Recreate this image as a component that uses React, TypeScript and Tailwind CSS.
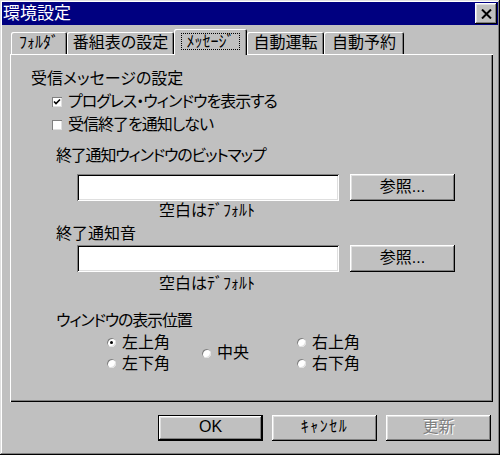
import React from 'react'

const raised =
  'shadow-[inset_-1px_-1px_#000,inset_1px_1px_#fff,inset_-2px_-2px_#808080,inset_2px_2px_#dfdfdf]'
const sunken =
  'shadow-[inset_1px_1px_#808080,inset_-1px_-1px_#fff,inset_2px_2px_#000,inset_-2px_-2px_#dfdfdf]'

function Tab({ label, width, active }: { label: string; width: string; active?: boolean }) {
  if (active) {
    return (
      <div
        className={`relative z-10 -mb-px flex h-[26px] ${width} items-center justify-center rounded-t-[2px] bg-[#c0c0c0] shadow-[inset_1px_1px_#fff,inset_-1px_0_#000,inset_-2px_0_#808080]`}
      >
        <span className="-mt-[2px] border border-dotted border-black px-[4px] leading-[15px]">
          {label}
        </span>
      </div>
    )
  }
  return (
    <div
      className={`flex h-[22px] ${width} items-center justify-center rounded-t-[2px] bg-[#c0c0c0] pb-[1px] shadow-[inset_1px_1px_#fff,inset_-1px_0_#000,inset_-2px_0_#808080]`}
    >
      <span className="leading-[18px]">{label}</span>
    </div>
  )
}

function Checkbox({ checked, label }: { checked?: boolean; label: string }) {
  return (
    <div className="flex h-[22px] items-center pb-[2px] pl-[42px]">
      <span className="flex h-[10px] w-[10px] items-center justify-center bg-white shadow-[inset_1px_1px_#808080,inset_-1px_-1px_#dfdfdf]">
        {checked && (
          <svg width="8" height="8" viewBox="0 0 8 8">
            <path d="M1 3.5 L3 5.5 L7 1.5" fill="none" stroke="#000" strokeWidth="1.6" />
          </svg>
        )}
      </span>
      <span className="ml-[6px] leading-[18px] tracking-[-1px]">{label}</span>
    </div>
  )
}

function Radio({ checked, label }: { checked?: boolean; label: string }) {
  return (
    <div className="flex items-center">
      <span className="flex h-[9px] w-[9px] items-center justify-center rounded-full bg-white shadow-[inset_1px_1px_#808080,inset_-1px_-1px_#dfdfdf]">
        {checked && <span className="h-[3px] w-[3px] rounded-full bg-black" />}
      </span>
      <span className="ml-[6px] leading-[18px]">{label}</span>
    </div>
  )
}

function Button({ children, primary, disabled }: { children: React.ReactNode; primary?: boolean; disabled?: boolean }) {
  return (
    <button
      className={`flex h-[26px] w-[105px] items-center justify-center bg-[#c0c0c0] pb-[2px] ${raised} ${
        primary ? 'border border-black' : ''
      } ${disabled ? 'text-[#808080] [text-shadow:1px_1px_#fff]' : 'text-black'}`}
    >
      <span className="leading-[18px]">{children}</span>
    </button>
  )
}

function FileRow() {
  return (
    <div className="ml-[67px] mt-[1px] flex h-[27px] items-stretch">
      <div className={`w-[262px] bg-white ${sunken}`} />
      <div className={`ml-[11px] flex w-[105px] items-center justify-center bg-[#c0c0c0] pb-[2px] ${raised}`}>
        <span className="leading-[18px]">参照...</span>
      </div>
    </div>
  )
}

export default function App() {
  return (
    <div className="flex h-[455px] w-[500px] flex-col bg-[#c0c0c0] p-[2px] font-['Liberation_Sans','Noto_Sans_CJK_JP',sans-serif] text-[16px] text-black [font-feature-settings:'palt'] shadow-[inset_-1px_-1px_#000,inset_1px_1px_#dfdfdf,inset_-2px_-2px_#808080,inset_2px_2px_#fff]">
      {/* title bar */}
      <div className="flex h-[23px] items-center justify-between bg-[#000080] pl-[1px]">
        <span className="text-[17px] leading-[20px] text-white">環境設定</span>
        <div className={`mr-[1px] flex h-[21px] w-[22px] items-center justify-center bg-[#c0c0c0] ${raised}`}>
          <svg width="11" height="10" viewBox="0 0 11 10">
            <path d="M1 0.5 L10 9.5 M10 0.5 L1 9.5" stroke="#000" strokeWidth="2" />
          </svg>
        </div>
      </div>

      {/* tabs */}
      <div className="ml-[9px] mt-[2px] flex h-[27px] items-end">
        <Tab label="ﾌｫﾙﾀﾞ" width="w-[56px]" />
        <Tab label="番組表の設定" width="w-[107px]" />
        <Tab label="ﾒｯｾｰｼﾞ" width="w-[73px]" active />
        <Tab label="自動運転" width="w-[77px]" />
        <Tab label="自動予約" width="w-[80px]" />
      </div>

      {/* panel */}
      <div className="ml-[8px] flex h-[348px] w-[483px] flex-col shadow-[inset_1px_1px_#fff,inset_-1px_-1px_#000,inset_-2px_-2px_#808080]">
        <div className="mt-[14px] flex h-[22px] items-center pb-[1px] pl-[21px]">
          <span className="leading-[18px]">受信メッセージの設定</span>
        </div>
        <div className="mt-[2px]">
          <Checkbox checked label="プログレス・ウィンドウを表示する" />
        </div>
        <div className="mt-[1px]">
          <Checkbox label="受信終了を通知しない" />
        </div>

        <div className="mt-[9px] flex h-[22px] items-center pb-[3px] pl-[46px]">
          <span className="leading-[18px] tracking-[-1.2px]">終了通知ウィンドウのビットマップ</span>
        </div>
        <div className="mt-[5px]">
          <FileRow />
        </div>
        <div className="mt-[1px] flex h-[20px] items-center pb-[3px] pl-[149px]">
          <span className="leading-[16px]">空白はﾃﾞﾌｫﾙﾄ</span>
        </div>

        <div className="mt-[4px] flex h-[18px] items-center pb-[3px] pl-[46px]">
          <span className="leading-[15px]">終了通知音</span>
        </div>
        <FileRow />
        <div className="mt-[2px] flex h-[20px] items-center pb-[2px] pl-[149px]">
          <span className="leading-[17px]">空白はﾃﾞﾌｫﾙﾄ</span>
        </div>

        <div className="mt-[19px] flex h-[18px] items-center pb-[3px] pl-[46px]">
          <span className="leading-[15px] tracking-[-1.2px]">ウィンドウの表示位置</span>
        </div>
        <div className="ml-[97px] mt-[1px] grid grid-cols-[95px_95px_95px] grid-rows-[21px_21px] pb-[2px]">
          <Radio checked label="左上角" />
          <div className="row-span-2 flex items-center">
            <Radio label="中央" />
          </div>
          <Radio label="右上角" />
          <Radio label="左下角" />
          <Radio label="右下角" />
        </div>
      </div>

      {/* buttons */}
      <div className="mt-[13px] flex justify-end gap-[9px] pr-[7px]">
        <Button primary>OK</Button>
        <Button>
          <span className="tracking-[1.5px]">ｷｬﾝｾﾙ</span>
        </Button>
        <Button disabled>更新</Button>
      </div>
    </div>
  )
}
